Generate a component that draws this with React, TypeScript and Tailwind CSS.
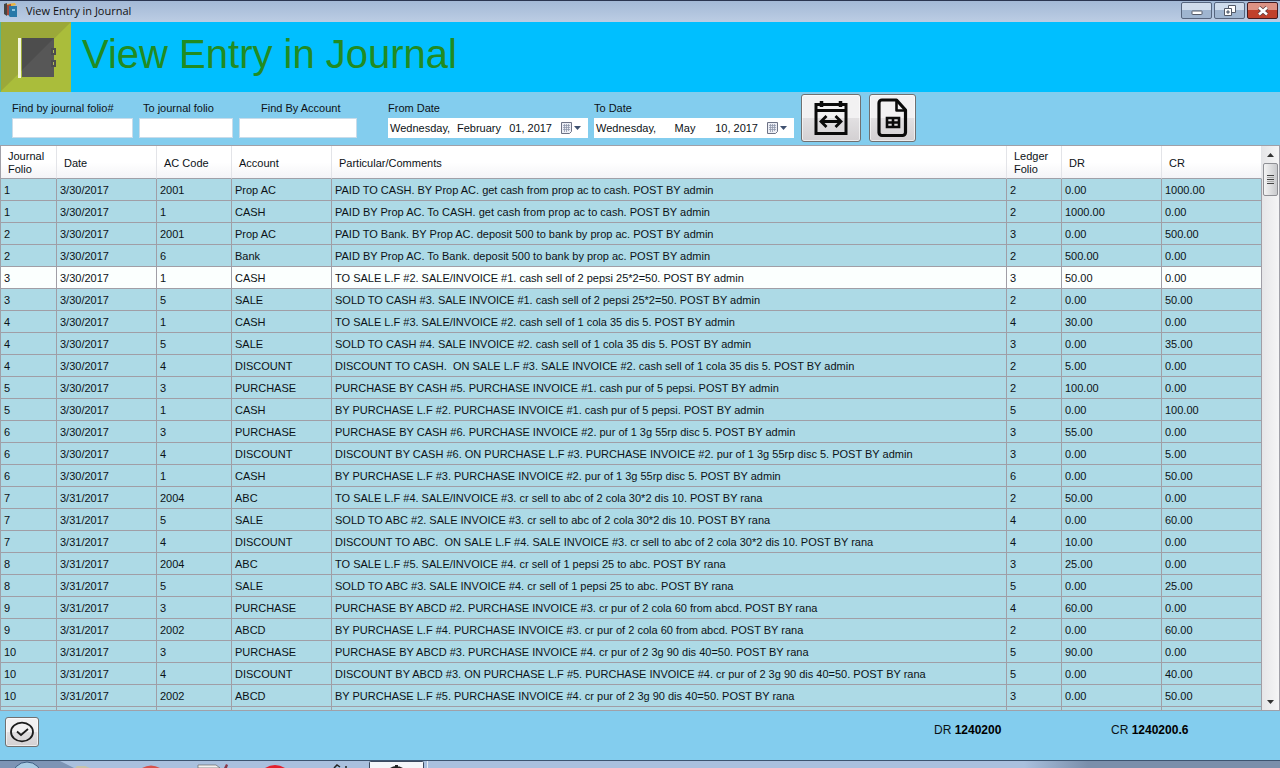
import type { ReactNode } from "react";

type Entry = [string, string, string, string, string, string, string, string];

const entries: Entry[] = [
  ["1", "3/30/2017", "2001", "Prop AC", "PAID TO CASH. BY Prop AC. get cash from prop ac to cash. POST BY admin", "2", "0.00", "1000.00"],
  ["1", "3/30/2017", "1", "CASH", "PAID BY Prop AC. To CASH. get cash from prop ac to cash. POST BY admin", "2", "1000.00", "0.00"],
  ["2", "3/30/2017", "2001", "Prop AC", "PAID TO Bank. BY Prop AC. deposit 500 to bank by prop ac. POST BY admin", "3", "0.00", "500.00"],
  ["2", "3/30/2017", "6", "Bank", "PAID BY Prop AC. To Bank. deposit 500 to bank by prop ac. POST BY admin", "2", "500.00", "0.00"],
  ["3", "3/30/2017", "1", "CASH", "TO SALE L.F #2. SALE/INVOICE #1. cash sell of 2 pepsi 25*2=50. POST BY admin", "3", "50.00", "0.00"],
  ["3", "3/30/2017", "5", "SALE", "SOLD TO CASH #3. SALE INVOICE #1. cash sell of 2 pepsi 25*2=50. POST BY admin", "2", "0.00", "50.00"],
  ["4", "3/30/2017", "1", "CASH", "TO SALE L.F #3. SALE/INVOICE #2. cash sell of 1 cola 35 dis 5. POST BY admin", "4", "30.00", "0.00"],
  ["4", "3/30/2017", "5", "SALE", "SOLD TO CASH #4. SALE INVOICE #2. cash sell of 1 cola 35 dis 5. POST BY admin", "3", "0.00", "35.00"],
  ["4", "3/30/2017", "4", "DISCOUNT", "DISCOUNT TO CASH.  ON SALE L.F #3. SALE INVOICE #2. cash sell of 1 cola 35 dis 5. POST BY admin", "2", "5.00", "0.00"],
  ["5", "3/30/2017", "3", "PURCHASE", "PURCHASE BY CASH #5. PURCHASE INVOICE #1. cash pur of 5 pepsi. POST BY admin", "2", "100.00", "0.00"],
  ["5", "3/30/2017", "1", "CASH", "BY PURCHASE L.F #2. PURCHASE INVOICE #1. cash pur of 5 pepsi. POST BY admin", "5", "0.00", "100.00"],
  ["6", "3/30/2017", "3", "PURCHASE", "PURCHASE BY CASH #6. PURCHASE INVOICE #2. pur of 1 3g 55rp disc 5. POST BY admin", "3", "55.00", "0.00"],
  ["6", "3/30/2017", "4", "DISCOUNT", "DISCOUNT BY CASH #6. ON PURCHASE L.F #3. PURCHASE INVOICE #2. pur of 1 3g 55rp disc 5. POST BY admin", "3", "0.00", "5.00"],
  ["6", "3/30/2017", "1", "CASH", "BY PURCHASE L.F #3. PURCHASE INVOICE #2. pur of 1 3g 55rp disc 5. POST BY admin", "6", "0.00", "50.00"],
  ["7", "3/31/2017", "2004", "ABC", "TO SALE L.F #4. SALE/INVOICE #3. cr sell to abc of 2 cola 30*2 dis 10. POST BY rana", "2", "50.00", "0.00"],
  ["7", "3/31/2017", "5", "SALE", "SOLD TO ABC #2. SALE INVOICE #3. cr sell to abc of 2 cola 30*2 dis 10. POST BY rana", "4", "0.00", "60.00"],
  ["7", "3/31/2017", "4", "DISCOUNT", "DISCOUNT TO ABC.  ON SALE L.F #4. SALE INVOICE #3. cr sell to abc of 2 cola 30*2 dis 10. POST BY rana", "4", "10.00", "0.00"],
  ["8", "3/31/2017", "2004", "ABC", "TO SALE L.F #5. SALE/INVOICE #4. cr sell of 1 pepsi 25 to abc. POST BY rana", "3", "25.00", "0.00"],
  ["8", "3/31/2017", "5", "SALE", "SOLD TO ABC #3. SALE INVOICE #4. cr sell of 1 pepsi 25 to abc. POST BY rana", "5", "0.00", "25.00"],
  ["9", "3/31/2017", "3", "PURCHASE", "PURCHASE BY ABCD #2. PURCHASE INVOICE #3. cr pur of 2 cola 60 from abcd. POST BY rana", "4", "60.00", "0.00"],
  ["9", "3/31/2017", "2002", "ABCD", "BY PURCHASE L.F #4. PURCHASE INVOICE #3. cr pur of 2 cola 60 from abcd. POST BY rana", "2", "0.00", "60.00"],
  ["10", "3/31/2017", "3", "PURCHASE", "PURCHASE BY ABCD #3. PURCHASE INVOICE #4. cr pur of 2 3g 90 dis 40=50. POST BY rana", "5", "90.00", "0.00"],
  ["10", "3/31/2017", "4", "DISCOUNT", "DISCOUNT BY ABCD #3. ON PURCHASE L.F #5. PURCHASE INVOICE #4. cr pur of 2 3g 90 dis 40=50. POST BY rana", "5", "0.00", "40.00"],
  ["10", "3/31/2017", "2002", "ABCD", "BY PURCHASE L.F #5. PURCHASE INVOICE #4. cr pur of 2 3g 90 dis 40=50. POST BY rana", "3", "0.00", "50.00"],
  ["", "", "", "", "", "", "", ""],
];

const SELECTED_ROW = 4;

const columns = ["Journal Folio", "Date", "AC Code", "Account", "Particular/Comments", "Ledger Folio", "DR", "CR"];

function TitleBar() {
  return (
    <div className="flex h-[22px] shrink-0 items-start border-t border-[#2a3550] bg-linear-to-b from-[#a3b9d6] to-[#bccde4] pl-[3px]">
      <svg className="mt-px h-4 w-4 shrink-0" viewBox="0 0 16 16" aria-hidden="true">
        <path d="M1 2l3-1v13l-3-2z" fill="#444" />
        <path d="M4 2l8-1 1 2-8 2z" fill="#e8b33c" />
        <path d="M4 3l4-1v12l-4-1z" fill="#a5493c" />
        <path d="M6 4h8v11H7l-1-1z" fill="#2878a8" />
        <path d="M9 7h3v2H9z" fill="#8cc6e2" />
      </svg>
      <span className="ml-[7px] mt-[2px] grow font-['Open_Sans','Noto_Sans',sans-serif] text-[11px] leading-4 text-[#111]">View Entry in Journal</span>
      <div className="mr-[2px] mt-px flex gap-[2px]">
        <button aria-label="Minimize" className="flex h-[17px] w-[31px] items-center justify-center rounded-[2px] border border-[#56657e] bg-linear-to-b from-[#cfdcec] from-50% to-[#9fb5d0] to-50%">
          <svg className="h-3 w-3" viewBox="0 0 12 12"><rect x="1" y="6" width="10" height="3.5" rx="0.5" fill="#fff" stroke="#535a68" /></svg>
        </button>
        <button aria-label="Restore" className="flex h-[17px] w-[31px] items-center justify-center rounded-[2px] border border-[#56657e] bg-linear-to-b from-[#cfdcec] from-50% to-[#9fb5d0] to-50%">
          <svg className="h-3 w-3" viewBox="0 0 12 12" fill="#fff" stroke="#535a68">
            <path d="M4.500 .5h7v7h-7z" />
            <path d="M.5 3.500h7v7h-7z" />
            <path d="M3 6h2v2H3z" fill="#9fb5d0" />
          </svg>
        </button>
        <button aria-label="Close" className="flex h-[17px] w-[31px] items-center justify-center rounded-[2px] border border-[#431a20] bg-linear-to-b from-[#dd9284] from-50% to-[#c0402b] to-50%">
          <svg className="h-3 w-3" viewBox="0 0 12 12" fill="none">
            <path d="M2 2.500l8 7M10 2.500l-8 7" stroke="#5c3a3c" strokeWidth="4.200" />
            <path d="M2 2.500l8 7M10 2.500l-8 7" stroke="#fff" strokeWidth="2.600" />
          </svg>
        </button>
      </div>
    </div>
  );
}

function JournalLogo() {
  return (
    <svg className="h-[70px] w-[71px] shrink-0" viewBox="0 0 71 70" aria-hidden="true">
      <rect width="71" height="70" fill="#aabd3b" />
      <path d="M0 0h71L0 70z" fill="#9ba839" />
      <path d="M0 0h1v70H0z" fill="#59b48d" />
      <path d="M18 16h3v40h-3z" fill="#f3f6dc" />
      <path d="M22 16h32v39H22z" fill="#4d4d4d" />
      <path d="M54 16v39H22v-7z" fill="#575757" />
      <path d="M52 27h3v5h-3zM52 39h3v5h-3z" fill="#b0b858" stroke="#4d4d4d" strokeWidth="2" />
    </svg>
  );
}

function SearchBox({ id, label, box, indent }: { id: string; label: string; box: string; indent: string }) {
  return (
    <div className={`flex flex-col ${box}`}>
      <label htmlFor={id} className={indent}>{label}</label>
      <input id={id} type="text" className="mt-[3px] h-5 w-full border border-[#c9dcea] bg-white px-1 outline-none" />
    </div>
  );
}

function DateBox({ id, label, weekday, month, rest }: { id: string; label: string; weekday: string; month: string; rest: string }) {
  return (
    <div className="flex w-[200px] flex-col">
      <label htmlFor={id}>{label}</label>
      <button id={id} className="mt-[3px] flex h-5 items-center bg-white pl-[2px] text-left">
        <span className="w-[62px]">{weekday}</span>
        <span className="w-[54px] text-center">{month}</span>
        <span className="w-[46px] text-right">{rest}</span>
        <svg className="ml-2 h-3 w-[22px]" viewBox="0 0 22 12" aria-hidden="true">
          <path d="M1.500.5h10v9l-2 2h-8z" fill="#eceef5" stroke="#6d7285" />
          <path d="M3 3.500h7M3 5.500h7M3 7.500h7M4.500 2v8M6.500 2v8M8.500 2v7" stroke="#9299ad" strokeWidth="0.800" />
          <path d="M14 4h7l-3.500 4z" fill="#3f5170" />
        </svg>
      </button>
    </div>
  );
}

function ToolButton({ label, size, children }: { label: string; size: string; children: ReactNode }) {
  return (
    <button
      aria-label={label}
      className={`flex items-center justify-center rounded-[3px] border border-[#707070] bg-linear-to-b from-[#f2f1f2] from-50% via-[#e2e0e2] via-50% to-[#d3d0d2] ring-1 ring-white/60 ring-inset ${size}`}
    >
      {children}
    </button>
  );
}

function FilterBar() {
  return (
    <form className="flex h-[53px] shrink-0 bg-[#83cdee] pl-3 leading-[14px]">
      <div className="flex gap-[6px] pt-[9px]">
        <SearchBox id="folio-from" label="Find by journal folio#" box="w-[121px]" indent="pl-0" />
        <SearchBox id="folio-to" label="To journal folio" box="w-[94px]" indent="pl-1" />
        <SearchBox id="account" label="Find By Account" box="w-[118px]" indent="pl-[22px]" />
      </div>
      <div className="ml-[31px] flex gap-[6px] pt-[9px]">
        <DateBox id="date-from" label="From Date" weekday="Wednesday," month="February" rest="01, 2017" />
        <DateBox id="date-to" label="To Date" weekday="Wednesday," month="May" rest="10, 2017" />
      </div>
      <div className="ml-[7px] flex gap-2 pt-[2px]">
        <ToolButton label="Find by date range" size="h-12 w-[60px]">
          <svg className="h-9 w-9" viewBox="0 0 36 36" fill="none" stroke="#0a0a0a" strokeWidth="3">
            <path d="M3 4.500h30v29H3zM2 10.500h32" />
            <path d="M8.500 1v6M27.500 1v6" strokeWidth="3.500" />
            <path d="M8.500 21.500h19M13.500 16L8 21.500l5.500 5.500M22.500 16l5.500 5.500-5.500 5.500" strokeWidth="2.800" />
          </svg>
        </ToolButton>
        <ToolButton label="Export sheet" size="h-12 w-[47px]">
          <svg className="h-10 w-8" viewBox="0 0 32 40" fill="none" stroke="#0a0a0a" strokeWidth="3.200" strokeLinejoin="round">
            <path d="M5 2h14.500l9 10v22.500a3 3 0 0 1-3 3H5a3 3 0 0 1-3-3V5a3 3 0 0 1 3-3z" />
            <path d="M19.500 2v10.500h9" strokeWidth="2.600" />
            <path d="M10 20h12v9H10zM16 20v9M10 24.500h12" strokeWidth="2.600" strokeLinejoin="miter" />
          </svg>
        </ToolButton>
      </div>
    </form>
  );
}

function JournalTable() {
  return (
    <div className="min-h-0 grow overflow-hidden border-y border-l border-[#a0a0a8]">
      <table className="w-full table-fixed border-separate border-spacing-0">
        <colgroup>
          <col className="w-[56px]" />
          <col className="w-[100px]" />
          <col className="w-[75px]" />
          <col className="w-[100px]" />
          <col />
          <col className="w-[55px]" />
          <col className="w-[100px]" />
          <col className="w-[100px]" />
        </colgroup>
        <thead>
          <tr className="h-[33px] bg-linear-to-b from-white from-50% to-[#f3f3f6]">
            {columns.map((name) => (
              <th key={name} scope="col" className="border-r border-b border-r-[#e3e4e8] border-b-[#a0a0a8] pt-[2px] pr-2 pb-0 pl-[7px] text-left align-middle font-normal leading-[13px]">
                {name}
              </th>
            ))}
          </tr>
        </thead>
        <tbody>
          {entries.map((entry, row) => (
            <tr key={row} className={row === SELECTED_ROW ? "h-[22px] bg-[#fbfffe]" : "h-[22px] bg-[#addae6]"}>
              {entry.map((value, column) => (
                <td key={column} className="overflow-hidden border-r border-b border-[#a09ea6] px-[3px] py-0 leading-4 whitespace-pre">
                  {value}
                </td>
              ))}
            </tr>
          ))}
        </tbody>
      </table>
    </div>
  );
}

function ScrollBar() {
  return (
    <div className="flex w-[18px] shrink-0 flex-col items-center border-y border-r border-[#a0a0a8] bg-linear-to-r from-[#e6e6e8] to-[#f5f5f6]">
      <button aria-label="Scroll up" className="flex h-[17px] w-full items-center justify-center">
        <svg className="h-1 w-[7px]" viewBox="0 0 7 4"><path d="M0 4l3.500-4L7 4z" fill="#333" /></svg>
      </button>
      <div className="flex h-[33px] w-[15px] flex-col items-center justify-center gap-px rounded-[2px] border border-[#8e8f94] bg-linear-to-r from-[#f4f4f4] to-[#c9cacd]">
        <span className="h-px w-[7px] bg-[#444]" />
        <span className="h-px w-[7px] bg-[#aaa]" />
        <span className="h-px w-[7px] bg-[#444]" />
        <span className="h-px w-[7px] bg-[#aaa]" />
        <span className="h-px w-[7px] bg-[#444]" />
      </div>
      <button aria-label="Scroll down" className="mt-auto flex h-[17px] w-full items-center justify-center">
        <svg className="h-1 w-[7px]" viewBox="0 0 7 4"><path d="M0 0h7L3.500 4z" fill="#333" /></svg>
      </button>
    </div>
  );
}

function Footer() {
  return (
    <div className="flex h-[49px] shrink-0 items-start bg-[#83cdee] pt-[6px] pl-[5px] text-[12px] leading-[14px]">
      <ToolButton label="Confirm" size="h-[30px] w-[34px]">
        <svg className="h-[22px] w-6" viewBox="0 0 24 22" fill="none" stroke="#1c1c1c" strokeWidth="1.800">
          <ellipse cx="12" cy="11" rx="11" ry="9.300" />
          <path d="M7 10.500l4 3.500 7-6" />
        </svg>
      </ToolButton>
      <p className="mt-[6px] ml-auto w-[177px]">DR <b className="text-black">1240200</b></p>
      <p className="mt-[6px] w-[169px]">CR <b className="text-black">1240200.6</b></p>
    </div>
  );
}

function TaskBar() {
  return (
    <div className="h-2 shrink-0 overflow-hidden border-t border-[#3d5470] bg-linear-to-r from-[#a9c0de] from-80% to-[#7a8fab] to-85%">
      <svg className="h-[7px] w-[430px]" viewBox="0 0 430 7" aria-hidden="true">
        <path d="M0 0h60l14 7H0z" fill="#7d94b5" />
        <circle cx="27" cy="16" r="15" fill="#a9cbe3" stroke="#3c5c80" />
        <path d="M75 7l2-2h8l5 2z" fill="#c5c3ab" />
        <path d="M142 7q9-5 18 0z" fill="#d8504a" />
        <path d="M198 4h18l4 3h-22z" fill="#f1f1f1" stroke="#666" strokeWidth="0.700" />
        <path d="M224 7l2-4 2 1-1 3z" fill="#8c3848" />
        <path d="M265 7q10-6 20 0z" fill="#e4202d" />
        <path d="M334 7l3-3 3 2M346 7v-2" fill="none" stroke="#222" strokeWidth="1.500" />
        <path d="M369.500 8V1.500q0-1 1-1h52q1 0 1 1V8" fill="#f4f6fa" stroke="#3b4a60" />
        <path d="M390 7q6-4 13 0zM395 4h3v2h-3z" fill="#222" />
        <path d="M427.500 0v7" stroke="#e4ecf5" />
      </svg>
    </div>
  );
}

export default function App() {
  return (
    <div className="flex h-screen flex-col overflow-hidden bg-[#83cdee] font-['Liberation_Sans',Arial,sans-serif] text-[11px] text-[#0c1216]">
      <TitleBar />
      <header className="flex h-[70px] shrink-0 items-start bg-[#00bfff]">
        <JournalLogo />
        <h1 className="ml-[11px] mt-2 text-[40px] leading-12 text-[#228b22]">View Entry in Journal</h1>
      </header>
      <FilterBar />
      <main className="flex min-h-0 grow">
        <JournalTable />
        <ScrollBar />
      </main>
      <Footer />
      <TaskBar />
    </div>
  );
}
